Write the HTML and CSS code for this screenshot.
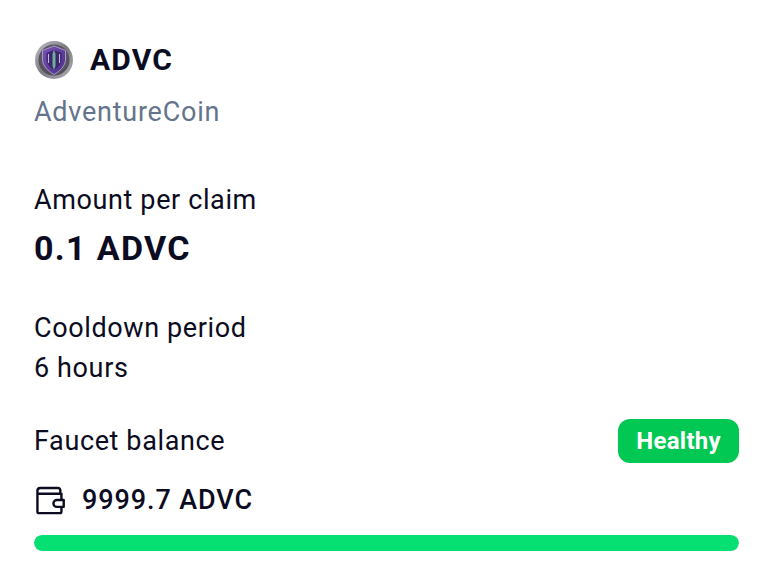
FILE: index.html
```html
<!DOCTYPE html>
<html lang="en">
<head>
<meta charset="utf-8">
<title>ADVC</title>
<link rel="stylesheet" href="styles.css">
</head>
<body>
<main class="card">
  <header class="head">
    <div class="title-row">
      <svg class="coin" viewBox="0 0 40 40" width="40" height="40" aria-hidden="true">
        <defs>
          <linearGradient id="rim" x1="0" y1="0" x2="1" y2="1"><stop offset="0" stop-color="#c4c2c6"/><stop offset=".5" stop-color="#7b7882"/><stop offset="1" stop-color="#b4b2b8"/></linearGradient>
          <radialGradient id="inner" cx=".5" cy=".45" r=".6"><stop offset="0" stop-color="#7d7783"/><stop offset="1" stop-color="#4b4753"/></radialGradient>
          <linearGradient id="shield" x1="0" y1="0" x2="1" y2="1"><stop offset="0" stop-color="#7a55b5"/><stop offset="1" stop-color="#4a2c86"/></linearGradient>
        </defs>
        <circle cx="20" cy="20" r="19" fill="url(#rim)"/>
        <circle cx="20" cy="20" r="15.500" fill="url(#inner)"/>
        <path d="M20 6 31.500 10.500V19c0 7-5.500 12-11.500 15.500C14 31 8.500 26 8.500 19V10.500Z" fill="url(#shield)" stroke="#a999c6" stroke-width="1"/>
        <path d="M20 10 27.500 13v6.500c0 4.500-3.500 8-7.500 10.500-4-2.500-7.500-6-7.500-10.500V13Z" fill="#3d2570"/>
        <path d="M20 9.500 21.500 14V26L20 30 18.500 26V14Z" fill="#6fae97"/>
        <path d="M14.500 14v9M25.500 14v9" stroke="#c5b6e0" stroke-width="1.100"/>
      </svg>
      <h1 class="symbol">ADVC</h1>
    </div>
    <p class="coin-name">AdventureCoin</p>
  </header>
  <section class="amount">
    <p class="label">Amount per claim</p>
    <p class="amount-value">0.1 ADVC</p>
  </section>
  <section class="cooldown">
    <p class="label">Cooldown period</p>
    <p class="label">6 hours</p>
  </section>
  <section class="balance">
    <div class="balance-head">
      <p class="label">Faucet balance</p>
      <span class="badge">Healthy</span>
    </div>
    <div class="balance-row">
      <svg class="wallet" viewBox="0 0 28 28" width="32" height="32" fill="none" stroke="#0b0b22" stroke-width="2.100" stroke-linejoin="round" stroke-linecap="round" aria-hidden="true">
        <path d="M23 8V5.500A2 2 0 0 0 21 3.500H5.500A2.500 2.500 0 0 0 3 6v18a1.500 1.500 0 0 0 1.500 1.500h18A1.500 1.500 0 0 0 24 24V8.500H4.500"/>
        <path d="M26 14h-6a3 3 0 0 0 0 6h6Z" fill="#fff"/>
      </svg>
      <span class="balance-value">9999.7 ADVC</span>
    </div>
    <div class="bar"><div class="bar-fill"></div></div>
  </section>
</main>
</body>
</html>
```
FILE: styles.css
```css
* { box-sizing: border-box; margin: 0; padding: 0; }
html, body { background: #fff; }
body {
  font-family: "Roboto", "Liberation Sans", sans-serif;
  color: #0b0b22;
  width: 758px;
  height: 568px;
  overflow: hidden;
}
.card { padding: 40px 19px 0 34px; display: flex; flex-direction: column; }
.title-row { display: flex; align-items: center; gap: 16px; height: 40px; }
.coin { flex: none; }
.symbol { font-size: 30px; font-weight: 700; line-height: 40px; letter-spacing: 1.2px; }
.coin-name { font-size: 27px; line-height: 40px; color: #64748b; margin-top: 12px; letter-spacing: .75px; }
.label { font-size: 27px; line-height: 40px; letter-spacing: .62px; }
.amount { margin-top: 48px; }
.amount-value { font-size: 34px; font-weight: 700; line-height: 48px; margin-top: 4px; letter-spacing: 1.35px; }
.cooldown { margin-top: 36px; }
.balance { margin-top: 31px; }
.balance-head { display: flex; align-items: center; justify-content: space-between; height: 44px; }
.badge {
  background: #00c853;
  color: #fff;
  font-size: 24px;
  font-weight: 700;
  border-radius: 12px;
  height: 44px;
  line-height: 44px;
  padding: 0 18px;
  letter-spacing: .3px;
}
.balance-row { display: flex; align-items: center; gap: 16px; height: 40px; margin-top: 17px; }
.wallet { flex: none; }
.balance-value { font-size: 27px; font-weight: 500; letter-spacing: .9px; }
.bar { height: 16px; border-radius: 8px; background: #e5e7eb; margin-top: 15px; overflow: hidden; }
.bar-fill { height: 100%; width: 100%; background: #06df72; border-radius: 8px; }
```
